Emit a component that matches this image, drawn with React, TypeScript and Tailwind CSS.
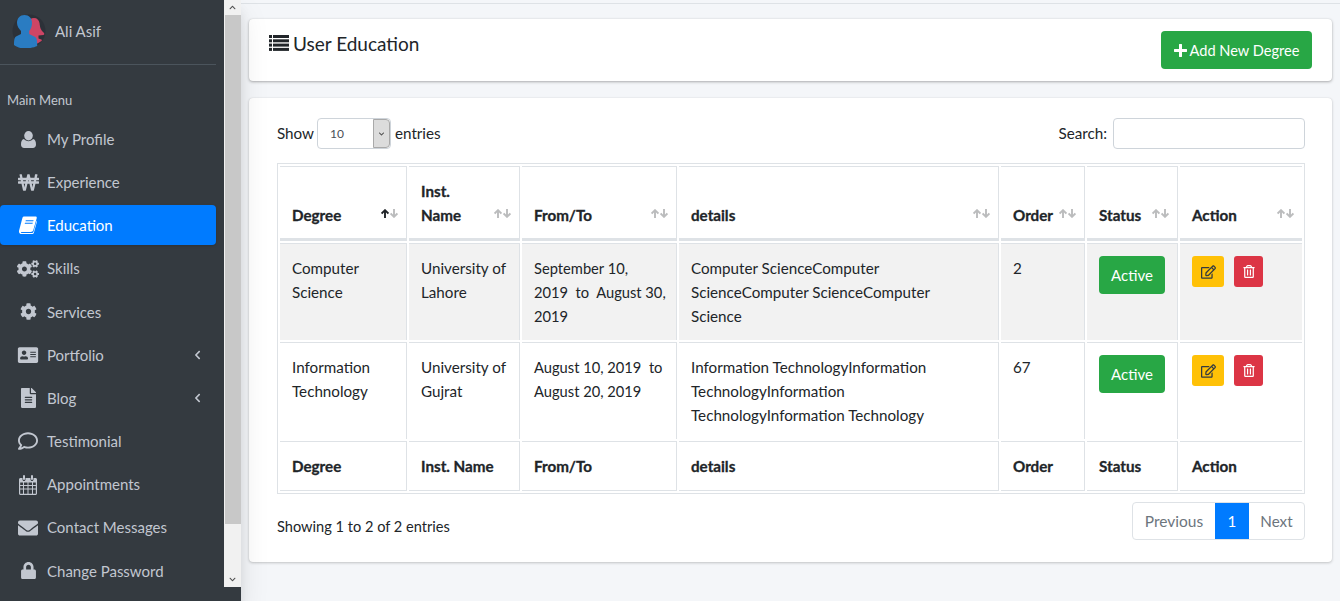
import React from "react";
import { FaWonSign, FaCogs, FaCog, FaAddressCard, FaFileAlt, FaRegComment, FaEnvelope, FaLock, FaRegEdit, FaRegTrashAlt, FaChevronUp, FaChevronDown, FaChevronLeft } from "react-icons/fa";

const font = { fontFamily: '"Lato", "Liberation Sans", sans-serif' };

function UserIcon({ className }: { className?: string }) {
  return (
    <svg viewBox="0 0 16 18" className={className} fill="currentColor">
      <ellipse cx="8" cy="5" rx="4.6" ry="5" />
      <path d="M3.2 8.5C4.4 10 6 10.8 8 10.8s3.6-.8 4.8-2.3c2.2.4 3.2 2.6 3.2 5.7 0 2.3-1.4 3.8-3.3 3.8H3.3C1.4 18 0 16.500 0 14.200c0-3.100 1-5.300 3.200-5.700z" />
    </svg>
  );
}

function BookIcon({ className }: { className?: string }) {
  return (
    <svg viewBox="0 0 18 18" className={className} fill="currentColor">
      <path d="M5 0.500h11.500c1 0 1.500.8 1.200 1.700l-3.300 11.600c-.4 1.400-1.400 2.200-2.800 2.200H2.800c-.8 0-1.100.5-.9 1h10.800c.9 0 1.500-.4 1.800-1.200l3.200-11.300.3 1.100-3.200 11.400c-.3 .7-1 1-1.800 1H2.500C.8 18-.4 16.400.1 14.500L3.400 2c.3-1 .9-1.500 1.600-1.500z" />
      <path d="M6.800 4.200h7.800l-.3 1.100H6.500zM6 6.700h7.800l-.3 1.100H5.700z" fill="#007bff" />
    </svg>
  );
}

function CalendarIcon({ className }: { className?: string }) {
  return (
    <svg viewBox="0 0 18 20" className={className} fill="currentColor">
      <path fillRule="evenodd" d="M1.500 3H3.500V4.500C3.500 5.300 4.100 6 5 6S6.500 5.300 6.500 4.500V3H11.500V4.500C11.500 5.300 12.100 6 13 6S14.500 5.300 14.500 4.500V3H16.500C17.300 3 18 3.700 18 4.500V18.500C18 19.300 17.300 20 16.500 20H1.500C.7 20 0 19.300 0 18.500V4.500C0 3.700 .7 3 1.500 3ZM1.200 7.500V10H4V7.500ZM5 7.500V10H8.500V7.500ZM9.500 7.500V10H13V7.500ZM14 7.500V10H16.800V7.500ZM1.200 11V13.500H4V11ZM5 11V13.500H8.500V11ZM9.500 11V13.500H13V11ZM14 11V13.500H16.800V11ZM1.200 14.500V18.800H4V14.500ZM5 14.500V18.800H8.500V14.500ZM9.500 14.500V18.800H13V14.500ZM14 14.500V18.800H16.800V14.500Z" />
      <rect x="4" y="0" width="2" height="5" rx="1" />
      <rect x="12" y="0" width="2" height="5" rx="1" />
    </svg>
  );
}

function Avatar() {
  return (
    <svg viewBox="0 0 34 34" className="w-[34px] h-[34px]">
      <circle cx="17" cy="17" r="16.500" fill="#2c3138" />
      <path d="M22 4c3 0 5 2 5.500 5 .5 4 1 7 4.500 10 .5 1 .5 1.500-.5 2l-5 .5v3l3 1c.5.5.5 1 0 1.500-2 1.500-5 3-8 3.500h-6V9c1-3 3.500-5 6.500-5z" fill="#cd4565" />
      <path d="M12.500 1c4.500 0 7.500 3 7.500 8 0 3-1 6-2.800 8v3l6 3c1.500 1 2 3 2 9-3 1.500-8 2.500-12.500 2.500S5 33 2 31c0-5 .5-7.500 2-8.500l5-2.500v-3C7 15 5 12 5 9c0-5 3-8 7.500-8z" fill="#2a7cc2" />
    </svg>
  );
}

function ListIcon({ className }: { className?: string }) {
  return (
    <svg viewBox="0 0 20 16" className={className} fill="currentColor">
      <rect x="0" y="0" width="3" height="3" />
      <rect x="0" y="4.300" width="3" height="3" />
      <rect x="0" y="8.600" width="3" height="3" />
      <rect x="0" y="12.900" width="3" height="3" />
      <rect x="4" y="0" width="16" height="3" />
      <rect x="4" y="4.300" width="16" height="3" />
      <rect x="4" y="8.600" width="16" height="3" />
      <rect x="4" y="12.900" width="16" height="3" />
    </svg>
  );
}

function PlusIcon({ className }: { className?: string }) {
  return (
    <svg viewBox="0 0 13 13" className={className} fill="currentColor">
      <path d="M5 0.500C5 .2 5.200 0 5.500 0h2c.3 0 .5.2.5.5V5h4.500c.3 0 .5.2.5.5v2c0 .3-.2.5-.5.5H8v4.500c0 .3-.2.5-.5.5h-2c-.3 0-.5-.2-.5-.5V8H.5C.2 8 0 7.800 0 7.500v-2C0 5.200.2 5 .5 5H5z" />
    </svg>
  );
}

function Arrow({ up, className }: { up?: boolean; className?: string }) {
  return (
    <svg viewBox="0 0 8 9" className={className} fill="none" stroke="currentColor" strokeWidth="1.900">
      {up ? <path d="M4 9V1.500M.6 4.600 4 1.200l3.400 3.400" /> : <path d="M4 0v7.500M.6 4.400 4 7.800l3.400-3.400" />}
    </svg>
  );
}

type NavItem = { label: string; icon: React.ReactNode; active?: boolean; chevron?: boolean };

const nav: NavItem[] = [
  { label: "My Profile", icon: <UserIcon className="w-[15px] h-[17px]" /> },
  { label: "Experience", icon: <FaWonSign className="w-[21px] h-[19px]" /> },
  { label: "Education", icon: <BookIcon className="w-[18px] h-[18px]" />, active: true },
  { label: "Skills", icon: <FaCogs className="w-[22px] h-[18px]" /> },
  { label: "Services", icon: <FaCog className="w-[17px] h-[17px]" /> },
  { label: "Portfolio", icon: <FaAddressCard className="w-[22px] h-[18px]" />, chevron: true },
  { label: "Blog", icon: <FaFileAlt className="w-[15px] h-[20px]" />, chevron: true },
  { label: "Testimonial", icon: <FaRegComment className="w-[20px] h-[20px]" /> },
  { label: "Appointments", icon: <CalendarIcon className="w-[18px] h-[20px]" /> },
  { label: "Contact Messages", icon: <FaEnvelope className="w-[20px] h-[20px]" /> },
  { label: "Change Password", icon: <FaLock className="w-[15px] h-[17px]" /> },
];

function Sidebar() {
  return (
    <aside className="relative z-10 w-[241px] h-[601px] shrink-0 bg-[#343a40] flex items-start shadow-[0_14px_28px_rgba(0,0,0,0.1),0_10px_10px_rgba(0,0,0,0.08)]">
      <div className="w-[224px] shrink-0">
        <div className="h-[65px] w-[216px] border-b border-[#4b545c] pl-[12px] pt-[14px] flex items-start gap-[9px]">
          <Avatar />
          <span className="text-[#c2c7d0] text-[15px] leading-[24px] mt-[5px]">Ali Asif</span>
        </div>
        <div className="pl-[7px] pt-[25px] h-[54px] text-[13px] leading-[20px] text-[#c2c7d0]">Main Menu</div>
        <ul className="w-[216px] flex flex-col gap-[3.200px]">
          {nav.map((n) => (
            <li
              key={n.label}
              className={`h-[40px] flex items-center rounded-[4px] ${n.active ? "bg-[#007bff] text-white shadow-sm" : "text-[#c2c7d0]"}`}
            >
              <span className="w-[47px] pl-[16px] pr-[7px] flex justify-center shrink-0">{n.icon}</span>
              <span className="flex-1 text-[15px] whitespace-nowrap">{n.label}</span>
              {n.chevron && <FaChevronLeft className="w-[7px] h-[10px] mr-[15px]" />}
            </li>
          ))}
        </ul>
      </div>
      <div className="w-[17px] h-[587px] bg-[#f1f1f1] flex flex-col shrink-0">
        <div className="h-[15px] flex items-center justify-center text-[#505050]"><FaChevronUp className="w-[9px] h-[7px]" /></div>
        <div className="h-[509px] ml-[1px] bg-[#c8c8c8]" />
        <div className="flex-1" />
        <div className="h-[15px] flex items-center justify-center text-[#505050]"><FaChevronDown className="w-[9px] h-[7px]" /></div>
      </div>
    </aside>
  );
}

const headers = ["Degree", "Inst. Name", "From/To", "details", "Order", "Status", "Action"];
const widths = ["w-[127px]", "w-[111px]", "w-[155px]", "w-[320px]", "w-[84px]", "w-[91px]", "w-[122px]"];

const rows: { degree: React.ReactNode; inst: React.ReactNode; dates: React.ReactNode; details: React.ReactNode; order: string }[] = [
  {
    degree: "Computer Science",
    inst: <>University of<br />Lahore</>,
    dates: <>September 10,<br />2019&nbsp; to&nbsp; August 30,<br />2019</>,
    details: <>Computer ScienceComputer<br />ScienceComputer ScienceComputer<br />Science</>,
    order: "2",
  },
  {
    degree: "Information Technology",
    inst: <>University of<br />Gujrat</>,
    dates: <>August 10, 2019&nbsp; to<br />August 20, 2019</>,
    details: <>Information TechnologyInformation<br />TechnologyInformation<br />TechnologyInformation Technology</>,
    order: "67",
  },
];

function SortArrows({ active }: { active?: boolean }) {
  return (
    <span className="absolute right-[8px] bottom-[20px] flex gap-[1.500px]">
      <Arrow up className={`w-[8px] h-[9px] text-[#212529] ${active ? "" : "opacity-30"}`} />
      <Arrow className="w-[8px] h-[9px] text-[#212529] opacity-30" />
    </span>
  );
}

const cell = "border-t border-r border-[#dee2e6] last:border-r-0 px-[12px] pt-[12px] align-top text-[15.200px] leading-[24px] whitespace-nowrap";
const heavy = "font-bold [-webkit-text-stroke:0.3px_currentColor]";

function Table() {
  return (
    <table className="w-[1028px] table-fixed border border-[#dee2e6] border-separate border-spacing-[2px] text-[#212529]">
      <colgroup>{widths.map((w) => <col key={w} className={w} />)}</colgroup>
      <thead>
        <tr className="h-[75px]">
          {headers.map((h, i) => (
            <th key={h} className={`relative border-t border-r last:border-r-0 border-b-[3px] border-[#dee2e6] px-[12px] pb-[11px] align-bottom text-left text-[15.200px] leading-[24px] ${heavy}`}>
              <span className="block pr-[14px]">{h}</span>
              <SortArrows active={i === 0} />
            </th>
          ))}
        </tr>
      </thead>
      <tbody>
        {rows.map((r, i) => (
          <tr key={r.order} className={`h-[97px] ${i === 0 ? "bg-[#f2f2f2]" : ""}`}>
            <td className={`${cell} !whitespace-normal`}>{r.degree}</td>
            <td className={cell}>{r.inst}</td>
            <td className={`${cell} !text-[14.700px]`}>{r.dates}</td>
            <td className={cell}>{r.details}</td>
            <td className={cell}>{r.order}</td>
            <td className={cell}>
              <span className="inline-flex items-center justify-center w-[66px] h-[38px] rounded-[4px] bg-[#28a745] text-white text-[15px]">Active</span>
            </td>
            <td className={cell}>
              <div className="flex gap-[10px]">
                <span className="w-[32px] h-[31px] rounded-[3px] bg-[#ffc107] text-[#343a40] flex items-center justify-center"><FaRegEdit className="w-[15px] h-[14px]" /></span>
                <span className="w-[29px] h-[31px] rounded-[3px] bg-[#dc3545] text-white flex items-center justify-center"><FaRegTrashAlt className="w-[12px] h-[13px]" /></span>
              </div>
            </td>
          </tr>
        ))}
      </tbody>
      <tfoot>
        <tr className="h-[50px]">
          {headers.map((h) => (
            <th key={h} className={`border-t border-r last:border-r-0 border-b border-[#dee2e6] px-[12px] align-middle text-left text-[15.200px] leading-[24px] whitespace-nowrap ${heavy}`}>{h}</th>
          ))}
        </tr>
      </tfoot>
    </table>
  );
}

export default function App() {
  return (
    <div className="flex w-[1340px] h-[601px] overflow-hidden bg-[#f4f6f9]" style={font}>
      <Sidebar />
      <main className="flex-1 min-w-0 flex flex-col">
        <div className="h-[4px] border-b border-[#dee2e6] shrink-0" />
        <div className="px-[8px] pt-[15px] flex flex-col gap-[17px]">
          <section className="h-[62px] bg-white rounded-[4px] shadow-[0_0_1px_rgba(0,0,0,0.125),0_1px_3px_rgba(0,0,0,0.3)] flex justify-between px-[20px]">
            <h1 className="flex items-start gap-[4px] pt-[13px] text-[19px] leading-[24px] text-[#212529] font-normal">
              <ListIcon className="w-[20px] h-[16px] mt-[3px]" />
              User Education
            </h1>
            <button className="mt-[12px] w-[151px] h-[38px] pt-[1px] rounded-[4px] bg-[#28a745] text-white text-[14.600px] flex items-center justify-center gap-[3px] whitespace-nowrap">
              <PlusIcon className="w-[13px] h-[13px]" />
              Add New Degree
            </button>
          </section>
          <section className="h-[464px] bg-white rounded-[4px] shadow-[0_0_1px_rgba(0,0,0,0.125),0_1px_3px_rgba(0,0,0,0.2)] pl-[28px] pr-[27px] pt-[20px] text-[#212529] text-[15.200px]">
            <div className="h-[31px] flex justify-between items-center mb-[14px]">
              <div className="flex items-center">
                <span className="w-[40px]">Show</span>
                <span className="w-[74px] h-[31px] border border-[#ced4da] rounded-[4px] flex items-center justify-between overflow-hidden">
                  <span className="pl-[12px] text-[12px] text-[#495057]">10</span>
                  <span className="w-[17px] h-full bg-[#dcdcdc] border border-[#a9a9a9] rounded-r-[4px] flex items-center justify-center text-[#505050]"><FaChevronDown className="w-[9px] h-[6px]" /></span>
                </span>
                <span className="ml-[4px]">entries</span>
              </div>
              <div className="flex items-center gap-[6px]">
                <span>Search:</span>
                <span className="w-[192px] h-[31px] border border-[#ced4da] rounded-[4px] bg-white block" />
              </div>
            </div>
            <Table />
            <div className="flex justify-between mt-[8px]">
              <span className="mt-[13px] leading-[24px] text-[14.600px]">Showing 1 to 2 of 2 entries</span>
              <div className="flex h-[38px] border border-[#dee2e6] rounded-[4px] overflow-hidden text-[#6c757d] pt-0">
                <span className="w-[82px] pt-[1px] flex items-center justify-center text-[15.500px]">Previous</span>
                <span className="w-[34px] pt-[1px] bg-[#007bff] text-white flex items-center justify-center">1</span>
                <span className="w-[55px] pt-[1px] flex items-center justify-center">Next</span>
              </div>
            </div>
          </section>
        </div>
      </main>
    </div>
  );
}
